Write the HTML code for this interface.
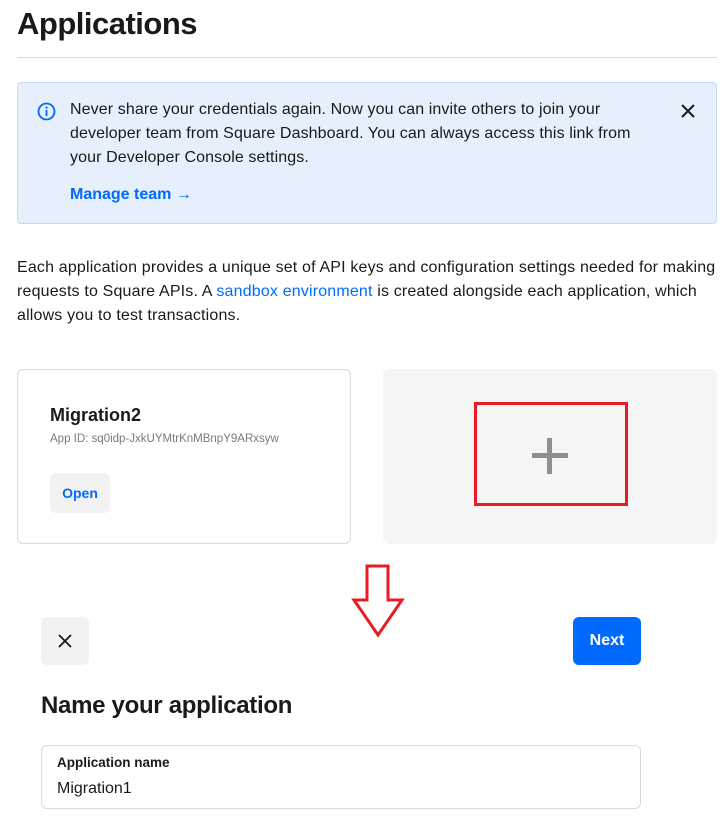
<!DOCTYPE html>
<html><head><meta charset="utf-8"><style>
*{margin:0;padding:0;box-sizing:border-box}
body{width:724px;height:820px;background:#fff;font-family:"Liberation Sans",sans-serif;color:#1a1a1a;position:relative;overflow:hidden}
.a{position:absolute}
</style></head><body>
<div class="a" style="left:17px;top:4px;font-size:31px;font-weight:bold;letter-spacing:-0.5px;line-height:40px">Applications</div>
<div class="a" style="left:17px;top:57px;width:700px;height:1px;background:#dadada"></div>
<div class="a" style="left:17px;top:82px;width:700px;height:142px;background:#e6effc;border:1px solid #c6daf7;border-radius:4px"></div>
<svg class="a" style="left:37px;top:102px" width="19" height="19" viewBox="0 0 19 19"><circle cx="9.5" cy="9.5" r="8" fill="none" stroke="#006aff" stroke-width="1.8"/><rect x="8.6" y="8" width="1.8" height="6" fill="#006aff"/><circle cx="9.5" cy="5.6" r="1.1" fill="#006aff"/></svg>
<div class="a" style="left:70px;top:98px;font-size:16px;line-height:24px;width:620px;letter-spacing:0.1px">Never share your credentials again. Now you can invite others to join your<br>developer team from Square Dashboard. You can always access this link from<br>your Developer Console settings.</div>
<div class="a" style="left:70px;top:185px;font-size:16px;font-weight:bold;color:#006aff;line-height:20px">Manage team →</div>
<svg class="a" style="left:680px;top:103px" width="16" height="16" viewBox="0 0 16 16"><path d="M2 2L14 14M14 2L2 14" stroke="#1a1a1a" stroke-width="2"/></svg>
<div class="a" style="left:17px;top:256px;font-size:16px;line-height:24px;width:710px;letter-spacing:0.17px">Each application provides a unique set of API keys and configuration settings needed for making<br>requests to Square APIs. A <span style="color:#006aff">sandbox environment</span> is created alongside each application, which<br>allows you to test transactions.</div>
<div class="a" style="left:17px;top:369px;width:334px;height:175px;border:1px solid #d9d9d9;border-radius:6px"></div>
<div class="a" style="left:50px;top:404px;font-size:18px;font-weight:bold;line-height:22px">Migration2</div>
<div class="a" style="left:50px;top:432px;font-size:11.5px;color:#7a7a7a;line-height:15px">App ID: sq0idp-JxkUYMtrKnMBnpY9ARxsyw</div>
<div class="a" style="left:50px;top:473px;width:60px;height:40px;background:#f2f2f2;border-radius:6px;color:#006aff;font-weight:bold;font-size:14px;line-height:40px;text-align:center">Open</div>
<div class="a" style="left:383px;top:369px;width:334px;height:175px;background:#f5f5f5;border-radius:6px"></div>
<div class="a" style="left:474px;top:402px;width:154px;height:104px;border:3px solid #e81c24"></div>
<div class="a" style="left:532px;top:453px;width:36px;height:5px;background:#8f8f8f"></div>
<div class="a" style="left:547px;top:438px;width:5px;height:36px;background:#8f8f8f"></div>
<svg class="a" style="left:350px;top:563px" width="56" height="76" viewBox="0 0 56 76"><path d="M17 3H38V37H52L28 72L4 37H17Z" fill="none" stroke="#e81c24" stroke-width="3" stroke-linejoin="miter"/></svg>
<div class="a" style="left:41px;top:617px;width:48px;height:48px;background:#f2f2f2;border-radius:6px"></div>
<svg class="a" style="left:58px;top:634px" width="14" height="14" viewBox="0 0 14 14"><path d="M1 1L13 13M13 1L1 13" stroke="#1a1a1a" stroke-width="1.8"/></svg>
<div class="a" style="left:573px;top:617px;width:68px;height:48px;background:#006aff;border-radius:6px;color:#fff;font-weight:bold;font-size:16px;line-height:48px;text-align:center">Next</div>
<div class="a" style="left:41px;top:691px;font-size:24px;font-weight:bold;line-height:30px;letter-spacing:-0.3px">Name your application</div>
<div class="a" style="left:41px;top:745px;width:600px;height:64px;border:1px solid #d9d9d9;border-radius:6px"></div>
<div class="a" style="left:57px;top:755px;font-size:13.5px;font-weight:bold;line-height:16px;color:#1a1a1a">Application name</div>
<div class="a" style="left:57px;top:779px;font-size:16px;line-height:20px">Migration1</div>
</body></html>
